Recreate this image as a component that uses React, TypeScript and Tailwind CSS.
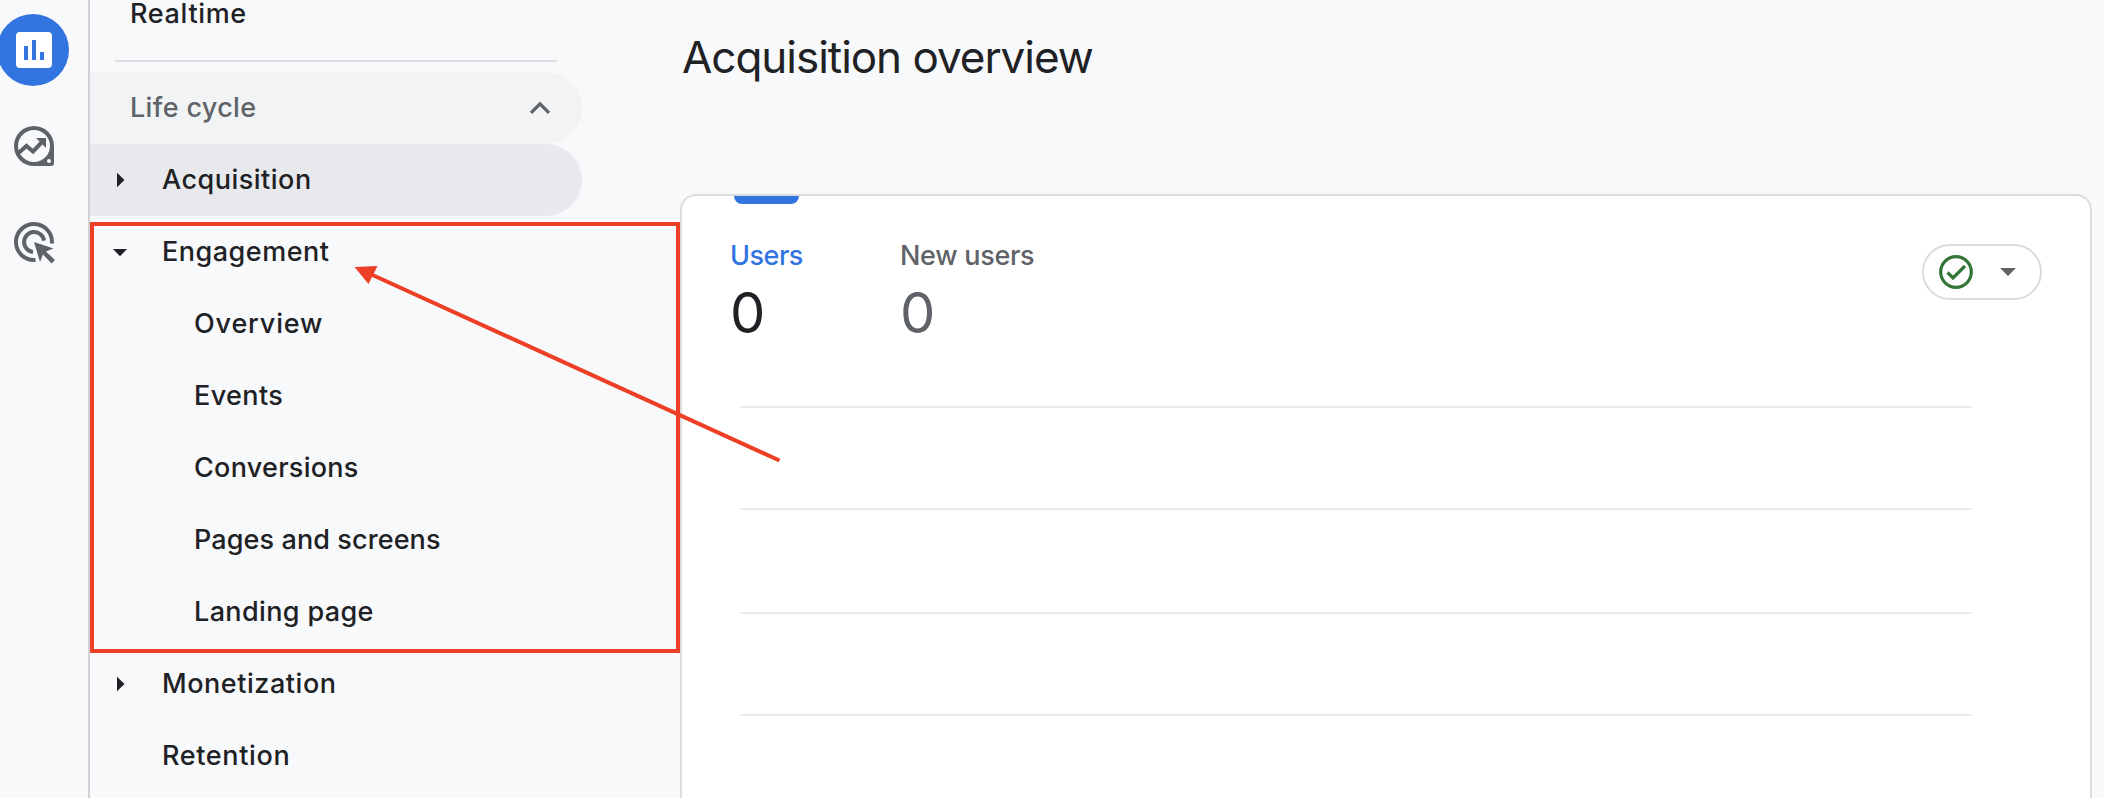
import { useState } from "react";
import clsx from "clsx";

interface NavItem {
  label: string;
  level: 0 | 1;
  arrow?: "right" | "down";
  active?: boolean;
  tracking: string;
}

const items: NavItem[] = [
  { label: "Acquisition", level: 0, arrow: "right", active: true, tracking: "tracking-[0.5px]" },
  { label: "Engagement", level: 0, arrow: "down", tracking: "tracking-[0.5px]" },
  { label: "Overview", level: 1, tracking: "tracking-[0.85px]" },
  { label: "Events", level: 1, tracking: "tracking-[0.4px]" },
  { label: "Conversions", level: 1, tracking: "tracking-[0.27px]" },
  { label: "Pages and screens", level: 1, tracking: "tracking-[0.1px]" },
  { label: "Landing page", level: 1, tracking: "tracking-[0.36px]" },
  { label: "Monetization", level: 0, arrow: "right", tracking: "tracking-[0.55px]" },
  { label: "Retention", level: 0, tracking: "tracking-[0.65px]" },
];

function ReportsIcon() {
  return (
    <svg viewBox="0 0 36 36" className="size-9">
      <rect width="36" height="36" rx="4" fill="#fff" />
      <path d="M8 14h4v14H8zM16 8h4v20h-4zM24 20h4v8h-4z" fill="#3275e1" />
    </svg>
  );
}

function ExploreIcon() {
  return (
    <svg viewBox="0 0 40 40" className="size-10">
      <path
        fill="#5f6368"
        fillRule="evenodd"
        d="M20 0a20 20 0 0 1 20 20v17a3 3 0 0 1-3 3H20a20 20 0 0 1 0-40zm0 4a16 16 0 1 0 0 32 16 16 0 0 0 0-32zm15 29a2 2 0 1 0 0 4 2 2 0 0 0 0-4z"
      />
      <path d="M4.500 27 12.500 20l6.500 5.500 10-10.500" fill="none" stroke="#5f6368" strokeWidth="4" />
      <path d="M22 12h10v10l-3.500-3.500-3-3z" fill="#5f6368" />
    </svg>
  );
}

function AdvertisingIcon() {
  return (
    <svg viewBox="0 0 40 40" className="size-10 overflow-visible">
      <g fill="none" stroke="#5f6368" strokeWidth="4">
        <path d="M21.500 37.900A18 18 0 1 1 37.900 21.500" />
        <path d="M19 30A10 10 0 1 1 30 18.600" />
      </g>
      <path d="M20 20l19.500 6.500-7.500 3 9 8.500-3.500 3.500-8.500-9-3 7.500z" fill="#5f6368" />
    </svg>
  );
}

function Caret({ dir }: { dir?: "right" | "down" }) {
  if (!dir) return null;
  return (
    <svg viewBox="0 0 24 24" className="size-6">
      <path d={dir === "right" ? "M9 4.800l7.500 7.200L9 19.200z" : "M5 9h14l-7 7.300z"} fill="#202124" />
    </svg>
  );
}

function Metric({ label, value, selected }: { label: string; value: string; selected?: boolean }) {
  return (
    <div className={clsx("flex flex-col", selected ? "w-[170px]" : "w-[160px] text-[#5f6368]")}>
      <span
        className={clsx(
          "h-9 text-[27px] leading-9 font-medium whitespace-nowrap",
          selected ? "tracking-[-0.5px] text-[#3275e1]" : "tracking-[-0.3px]",
        )}
      >
        {label}
      </span>
      <span className="mt-[3px] text-[56px] leading-[72px]">{value}</span>
    </div>
  );
}

export default function App() {
  const [open, setOpen] = useState(true);

  return (
    <div className="relative flex h-[798px] w-[2104px] overflow-hidden bg-[#f8f9fb] font-['Inter',sans-serif] text-[#202124]">
      <aside className="flex w-[90px] shrink-0 flex-col border-r-2 border-[#d0d2d5] pt-3.5">
        <div className="-ml-[3px] flex size-[72px] items-center justify-center rounded-full bg-[#3275e1] pl-0.5">
          <ReportsIcon />
        </div>
        <div className="mt-10 ml-3.5"><ExploreIcon /></div>
        <div className="mt-14 ml-3.5"><AdvertisingIcon /></div>
      </aside>

      <nav className="flex w-[590px] shrink-0 flex-col text-[27px] font-medium">
        <div className="flex h-[50px] shrink-0 items-start pl-10 leading-7 tracking-[0.65px]">Realtime</div>
        <div className="mt-2.5 mb-2.5 ml-[25px] h-0.5 w-[442px] shrink-0 bg-[#dadce0]" />
        <button
          onClick={() => setOpen(!open)}
          className="flex h-[72px] w-[492px] shrink-0 items-center justify-between rounded-l-[4px] rounded-r-full bg-[#f1f3f4] pr-[30px] pl-10 tracking-[0.35px] text-[#5f6368]"
        >
          <span>Life cycle</span>
          <svg viewBox="0 0 24 16" className="h-4 w-6">
            <path d="M3 12.800 12 3.800l9 9" fill="none" stroke="#5f6368" strokeWidth="3.200" />
          </svg>
        </button>
        {open && items.map((item) => (
          <div
            key={item.label}
            className={clsx("flex h-[72px] w-[492px] shrink-0 items-center rounded-l-[4px] rounded-r-full", item.active && "bg-[#e8e9ed]")}
          >
            <span className={clsx("flex shrink-0 pl-[18px]", item.level === 0 ? "w-[72px]" : "w-[104px]")}><Caret dir={item.arrow} /></span>
            <span className={clsx("whitespace-nowrap", item.tracking)}>{item.label}</span>
          </div>
        ))}
      </nav>

      <main className="flex w-[1412px] shrink-0 flex-col">
        <h1 className="h-[194px] shrink-0 pt-[29px] pl-0.5 text-[44px] leading-[56px] tracking-[-1.03px]">Acquisition overview</h1>
        <section className="flex h-[640px] shrink-0 flex-col rounded-2xl border-2 border-[#dadce0] bg-white">
          <div className="ml-[52px] h-2 w-[65px] rounded-b-lg bg-[#3275e1]" />
          <div className="flex h-36 pt-[34px] pl-12">
            <Metric label="Users" value="0" selected />
            <Metric label="New users" value="0" />
            <button className="mt-1.5 mr-12 ml-auto flex h-14 w-[120px] items-center rounded-full border-2 border-[#dadce0] pl-3">
              <svg viewBox="0 0 40 40" className="size-10">
                <circle cx="20" cy="20" r="15.300" fill="none" stroke="#34753a" strokeWidth="3.200" />
                <path d="M11.500 20.500l5.500 5.500 12-12" fill="none" stroke="#34753a" strokeWidth="3.200" />
              </svg>
              <svg viewBox="0 0 16 8" className="ml-6 h-2 w-4"><path d="M0 0h16L8 8z" fill="#5f6368" /></svg>
            </button>
          </div>
          <div className="mt-[58px] ml-[58px] flex w-[1232px] flex-col">
            <div className="h-[102px] border-t-2 border-[#ebebeb]" />
            <div className="h-[104px] border-t-2 border-[#ebebeb]" />
            <div className="h-[102px] border-t-2 border-[#ebebeb]" />
            <div className="border-t-2 border-[#ebebeb]" />
          </div>
        </section>
      </main>

      {/* callout around the Engagement group */}
      <div className="absolute top-[222px] left-[90px] h-[431px] w-[590px] border-4 border-[#ec3f25]" />
      <svg viewBox="0 0 430 200" className="absolute top-[264px] left-[352px] h-[200px] w-[430px]">
        <path d="M20 10.800 427.500 196.500" stroke="#ec3f25" strokeWidth="4" />
        <path d="M2.500 3 25.500 2 16.500 20z" fill="#ec3f25" />
      </svg>
    </div>
  );
}
